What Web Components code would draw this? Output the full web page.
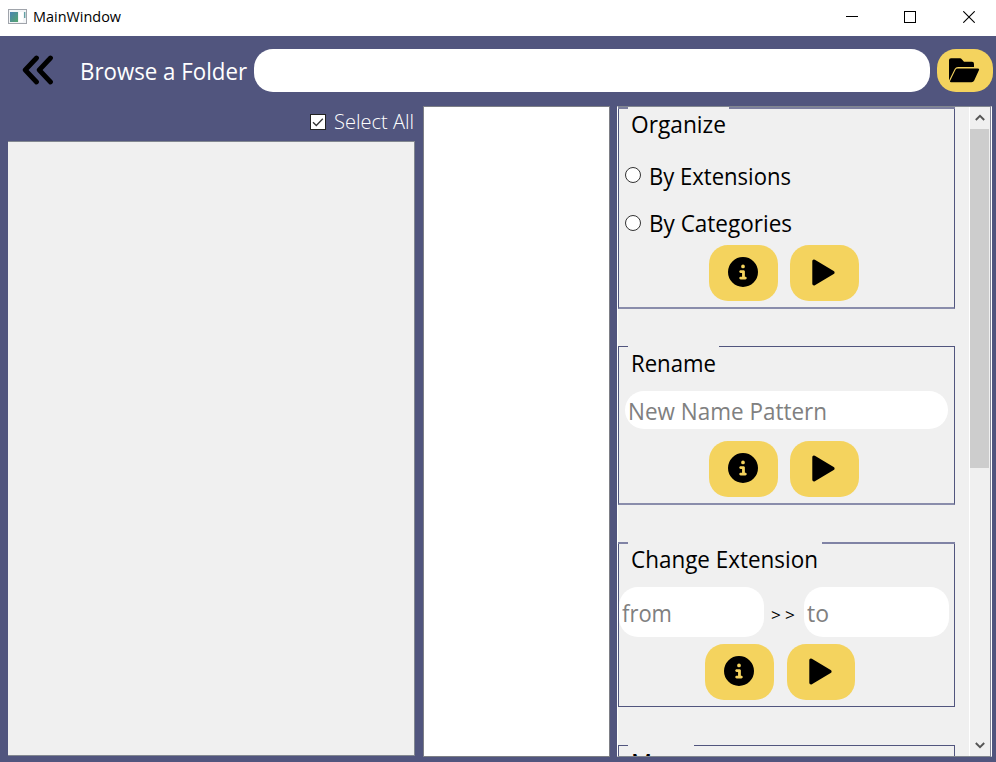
<!DOCTYPE html>
<html lang="en">
<head>
<meta charset="utf-8">
<title>MainWindow</title>
<style>
html,body{margin:0;width:996px;height:762px;overflow:hidden;font-family:"Open Sans","Noto Sans",sans-serif}
</style>
</head>
<body>
<main-window></main-window>
<script>
const define = (name, html, setup) => customElements.define(name, class extends HTMLElement {
  connectedCallback() {
    if (this.shadowRoot) return;
    this.attachShadow({mode: 'open'}).innerHTML = html;
    if (setup) setup(this, this.shadowRoot);
  }
});

/* A single line of text condensed or widened to the width in its "w" attribute. */
define('fit-text', `<style>
:host{display:block;flex:none;white-space:nowrap;line-height:32px;font-size:23px}
span{display:inline-block;transform-origin:0 50%}
</style><span></span>`, (el, root) => {
  const span = root.querySelector('span');
  span.textContent = el.getAttribute('text');
  const w = +el.getAttribute('w');
  el.style.width = w + 'px';
  if (el.hasAttribute('size')) el.style.fontSize = el.getAttribute('size') + 'px';
  span.style.transform = `scaleX(${w / span.getBoundingClientRect().width})`;
});

define('title-bar', `<style>
:host{display:flex;height:36px;background:#fff;color:#000;align-items:center;padding-left:8px;box-sizing:border-box}
.app{width:19px;height:16px;margin:-2px 6px 0 0}
fit-text{margin:-2px auto 0 0}
.ctl{display:flex;margin-top:-2px}
.ctl svg{width:12px;height:12px;margin-right:46px}
.ctl svg:nth-child(2){margin-right:47px}
.ctl svg:last-child{width:12px;margin-right:21px}
</style>
<svg class="app" viewBox="0 0 19 16"><defs><linearGradient id="g" x1="0" y1="0" x2="1" y2="1"><stop offset="0" stop-color="#4a83b4"/><stop offset="1" stop-color="#55a56c"/></linearGradient></defs><rect x=".5" y=".5" width="18" height="14" fill="#f3f5f7" stroke="#a0a4ab"/><rect x="2" y="3" width="8" height="10" fill="url(#g)"/><rect x="11" y="3" width="4" height="10" fill="#fff"/><rect x="16" y="3" width="1.4" height="6" fill="#64a0a4"/></svg>
<fit-text text="MainWindow" w="88" size="14.5"></fit-text>
<div class="ctl"><svg viewBox="0 0 12 12"><path d="M0 5.5H12" stroke="#000"/></svg><svg viewBox="0 0 12 12"><rect x=".5" y=".5" width="11" height="11" fill="none" stroke="#000"/></svg><svg viewBox="0 0 12 12"><path d="M.3.3 11.7 11.7M11.7.3.3 11.7" stroke="#000" stroke-width="1.1"/></svg></div>`);

define('browse-bar', `<style>
:host{display:flex;height:70px;align-items:center;color:#fff;padding:0 3px 0 22px;box-sizing:border-box}
.back{width:32px;height:30px;margin:-2px 26px 0 0}
.path{flex:1;height:43px;border-radius:19px;background:#fff;margin:0 7px 1px 7px}
.open{width:56px;height:43px;margin-bottom:1px;border-radius:19px;background:#f4d35e;display:flex;align-items:center;justify-content:center}
.open svg{width:31px;height:25px;margin-right:1px}
</style>
<svg class="back" viewBox="0 0 32 30"><path d="M14.5 3 3.2 15 14.5 27M28.5 3 17.2 15 28.5 27" fill="none" stroke="#000" stroke-width="4.8" stroke-linecap="round" stroke-linejoin="round"/></svg>
<fit-text text="Browse a Folder" w="167"></fit-text>
<div class="path"></div>
<div class="open"><svg viewBox="0 0 31 25"><path d="M0 2Q0 .3 2 .3H11Q12 .3 13 1.6L15 3.7H23Q25 3.7 25 6V9H9Q6.7 9 5.7 11L0 22.5zM8.5 10.4H29Q30.7 10.4 30 12L25.2 22.5Q24.4 24.2 22.5 24.2H1.8Q.5 24.2 1.2 22.8L6.5 11.7Q7.1 10.4 8.5 10.4z"/></svg></div>`);

define('select-all', `<style>
:host{display:flex;height:35px;align-items:center;justify-content:flex-end;color:#fff}
svg{width:16px;height:16px;margin:-3px 8px 0 0}
fit-text{margin:-5px 1px 0 0;font-weight:300}
</style>
<svg viewBox="0 0 16 16"><rect x=".5" y=".5" width="15" height="15" fill="#fff" stroke="#222"/><path d="M3 8.2 6.3 11.5 12.8 4.8" fill="none" stroke="#333" stroke-width="1.3"/></svg>
<fit-text text="Select All" w="80" size="20.5"></fit-text>`);

define('radio-row', `<style>
:host{display:flex;height:46px;align-items:center;padding-left:6px}
i{width:14px;height:14px;border:1px solid #333;border-radius:50%;background:#fff;margin:0 8px 1px 0}
</style><i></i><slot></slot>`);

define('action-buttons', `<style>
:host{display:flex;gap:var(--gap,12px);height:56px}
div{width:69px;border-radius:19px;background:#f4d35e;display:flex;align-items:center;justify-content:center}
div:last-child{width:var(--w,69px)}
.info{width:30px;height:30px;margin:0 1px 2px 0}
.play{width:23px;height:27px;margin:0 2px 2px 0}
</style>
<div><svg class="info" viewBox="0 0 512 512"><path d="M256 512A256 256 0 1 0 256 0a256 256 0 1 0 0 512zM216 336h24V272H216c-13.3 0-24-10.7-24-24s10.7-24 24-24h48c13.3 0 24 10.7 24 24v88h8c13.3 0 24 10.7 24 24s-10.7 24-24 24H216c-13.3 0-24-10.7-24-24s10.7-24 24-24zm40-208a32 32 0 1 1 0 64 32 32 0 1 1 0-64z"/></svg></div>
<div><svg class="play" viewBox="0 0 23 27"><path d="M2 2.2V24.8L20.8 13.5z" stroke="#000" stroke-width="3.4" stroke-linejoin="round"/></svg></div>`);

define('pill-input', `<style>
:host{display:flex;align-items:center;box-sizing:border-box;background:#fff;border-radius:19px;color:#808080;padding-left:3px}
</style><slot></slot>`);

define('group-box', `<style>
:host{display:flex;flex-direction:column;flex:none;width:337px;box-sizing:border-box}
.top{display:flex;height:var(--top,1px)}
.top b{width:10px;background:var(--line,#51557e)}
.top b:last-child{flex:1}
.body{flex:1;display:flex;flex-direction:column;border:1px solid #51557e;border-top:0;border-bottom:var(--bottom,1px solid #51557e);box-sizing:border-box}
.title{padding-left:12px;height:32px;margin-top:var(--lift,0)}
</style>
<div class="top"><b></b><span></span><b></b></div>
<div class="body"><div class="title"></div><slot></slot></div>`, (el, root) => {
  root.querySelector('span').style.width = el.getAttribute('notch') + 'px';
  root.querySelector('.title').innerHTML = `<fit-text text="${el.getAttribute('label')}" w="${el.getAttribute('w')}"></fit-text>`;
});

define('scroll-bar', `<style>
:host{display:flex;flex-direction:column;align-items:center;width:22px;box-sizing:border-box;border-left:1px solid #fff;border-right:1px solid #858799;background:#f0f0f0}
svg{width:10px;height:7px;margin:7px 1px 8px 0}
i{width:19px;height:339px;background:#cdcdcd;margin-right:1px}
svg:last-child{margin:auto 1px 7px 0}
</style>
<svg viewBox="0 0 10 7"><path d="M.8 6 5 1.8 9.2 6" fill="none" stroke="#555" stroke-width="1.9"/></svg><i></i>
<svg viewBox="0 0 10 7"><path d="M.8 1 5 5.2 9.2 1" fill="none" stroke="#555" stroke-width="1.9"/></svg>`);

define('tools-panel', `<style>
:host{display:flex;box-sizing:border-box;width:375px;height:651px;background:#f0f0f0;border:1px solid #fff;border-top-color:#828790;border-bottom-color:#828790;overflow:hidden;color:#000}
.list{flex:1;display:flex;flex-direction:column;height:649px;overflow:hidden}
.organize{height:202px;--top:2px;--line:#7c7f9f;--lift:-1px;--bottom:2px solid #8a8dab;margin-bottom:37px}
.rename{height:159px;--bottom:2px solid #8a8dab;margin-bottom:37px}
.change{height:165px;--top:2px;--lift:-1px;--line:#8083a5;margin-bottom:38px}
.move{height:150px;--top:1px;--line:#51557e}
.pair{display:flex;height:50px;align-items:center;margin-top:12px}
</style>
<div class="list">
<group-box class="organize" label="Organize" notch="101" w="95">
<radio-row style="margin-top:12px"><fit-text text="By Extensions" w="142" style="margin-top:2px"></fit-text></radio-row>
<radio-row style="margin-top:2px"><fit-text text="By Categories" w="143"></fit-text></radio-row>
<action-buttons style="margin:-1px 0 0 90px"></action-buttons>
</group-box>
<group-box class="rename" label="Rename" notch="91" w="85">
<pill-input style="margin:12px 6px 0 6px;height:38px"><fit-text text="New Name Pattern" w="199" style="padding-top:2px"></fit-text></pill-input>
<action-buttons style="margin:12px 0 0 90px"></action-buttons>
</group-box>
<group-box class="change" label="Change Extension" notch="194" w="187">
<div class="pair">
<pill-input style="width:145px;height:50px"><fit-text text="from" w="50" style="padding-top:2px"></fit-text></pill-input>
<fit-text text="&gt;&gt;" w="28" size="17" style="letter-spacing:4px;margin:6px 5px 0 7px"></fit-text>
<pill-input style="width:145px;height:50px"><fit-text text="to" w="22" style="padding-top:2px"></fit-text></pill-input>
</div>
<action-buttons style="margin:7px 0 0 86px;--gap:13px;--w:68px"></action-buttons>
</group-box>
<group-box class="move" label="Move" notch="66" w="60"></group-box>
</div>
<scroll-bar></scroll-bar>`);

define('main-window', `<style>
:host{display:flex;flex-direction:column;width:996px;height:762px;background:#51557e}
.body{display:flex;padding-left:8px}
.left{width:407px;display:flex;flex-direction:column;height:650px;margin-right:8px}
.files{flex:1;background:#f0f0f0;border:1px solid #828790;border-left:0}
.mid{width:187px;height:651px;box-sizing:border-box;background:#fff;border:1px solid #7d7f86;margin-right:7px}
</style>
<title-bar></title-bar>
<browse-bar></browse-bar>
<div class="body">
<div class="left"><select-all></select-all><div class="files"></div></div>
<div class="mid"></div>
<tools-panel></tools-panel>
</div>`);
</script>
</body>
</html>
